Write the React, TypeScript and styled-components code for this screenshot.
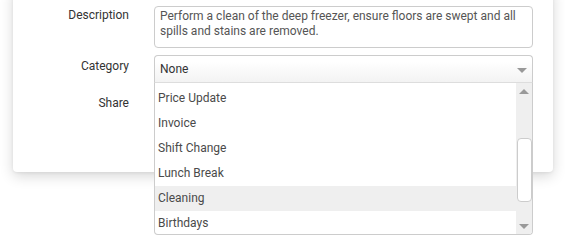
import React from "react";
import styled, { createGlobalStyle } from "styled-components";

const Global = createGlobalStyle`
  html, body { margin: 0; padding: 0; background: #fff; }
  body { font-family: Roboto, "Liberation Sans", Arial, sans-serif; }
  * { box-sizing: border-box; }
`;

const Page = styled.div`
  width: 565px;
  height: 250px;
  overflow: hidden;
  padding: 0 12px 0 13px;
`;

const Card = styled.div`
  margin-top: -12px;
  width: 540px;
  background: #fff;
  border-radius: 4px;
  box-shadow: 0 4px 14px rgba(0, 0, 0, 0.16), 0 1px 3px rgba(0, 0, 0, 0.06);
  padding: 18px 20px 54px 0;
`;

const Form = styled.div`
  display: grid;
  grid-template-columns: 116px 1fr;
  column-gap: 25px;
  row-gap: 7px;
  align-items: start;
`;

const Label = styled.div<{ $pt: number }>`
  text-align: right;
  font-size: 12px;
  line-height: 16px;
  color: #333;
  padding-top: ${(p) => p.$pt}px;
`;

const TextArea = styled.div`
  height: 42px;
  border: 1px solid #ccc;
  border-radius: 4px;
  padding: 2px 5px;
  font-size: 12px;
  line-height: 15px;
  color: #555;
`;

const SelectWrap = styled.div`
  position: relative;
`;

const SelectHead = styled.div`
  height: 28px;
  border: 1px solid #ccc;
  border-bottom-color: #ddd;
  border-radius: 4px 4px 0 0;
  background: linear-gradient(#ffffff 20%, #f3f3f3);
  display: flex;
  align-items: center;
  justify-content: space-between;
  padding: 0 5px 0 5px;
  font-size: 12px;
  color: #333;
`;

const Arrow = styled.span<{ $up?: boolean }>`
  width: 0;
  height: 0;
  border-left: 5px solid transparent;
  border-right: 5px solid transparent;
  ${(p) =>
    p.$up ? "border-bottom: 5px solid #999;" : "border-top: 5px solid #999;"}
`;

const HeadArrow = styled(Arrow)`
  margin-top: 2px;
`;

const Dropdown = styled.div`
  position: absolute;
  top: 100%;
  left: 0;
  right: 0;
  height: 152px;
  background: #fff;
  border: 1px solid #ccc;
  border-top: none;
  border-radius: 0 0 4px 4px;
  display: flex;
  overflow: hidden;
  z-index: 10;
`;

const Items = styled.div`
  flex: 1;
  padding-top: 3px;
`;

const Item = styled.div<{ $active?: boolean }>`
  height: 25px;
  line-height: 25px;
  padding-left: 3px;
  font-size: 12px;
  color: #4a4a4a;
  background: ${(p) => (p.$active ? "#efefef" : "transparent")};
`;

const Track = styled.div`
  width: 16px;
  background: #efefef;
  display: flex;
  flex-direction: column;
  align-items: center;
  padding: 6px 0 5px;
`;

const Thumb = styled.div`
  width: 15px;
  height: 64px;
  margin-top: 44px;
  background: #fff;
  border: 1px solid #ccc;
  border-radius: 4px;
`;

const Spacer = styled.div`
  flex: 1;
`;

const FieldBox = styled.div`
  height: 28px;
`;

const items = ["Price Update", "Invoice", "Shift Change", "Lunch Break", "Cleaning", "Birthdays"];

export default function App() {
  return (
    <Page>
      <Global />
      <Card>
        <Form>
          <Label $pt={1}>Description</Label>
          <TextArea>
            Perform a clean of the deep freezer, ensure floors are swept and all spills and stains are removed.
          </TextArea>
          <Label $pt={3}>Category</Label>
          <SelectWrap>
            <SelectHead>
              <span>None</span>
              <HeadArrow />
            </SelectHead>
            <Dropdown>
              <Items>
                {items.map((t) => (
                  <Item key={t} $active={t === "Cleaning"}>
                    {t}
                  </Item>
                ))}
              </Items>
              <Track>
                <Arrow $up />
                <Thumb />
                <Spacer />
                <Arrow />
              </Track>
            </Dropdown>
          </SelectWrap>
          <Label $pt={5}>Share</Label>
          <FieldBox />
        </Form>
      </Card>
    </Page>
  );
}
